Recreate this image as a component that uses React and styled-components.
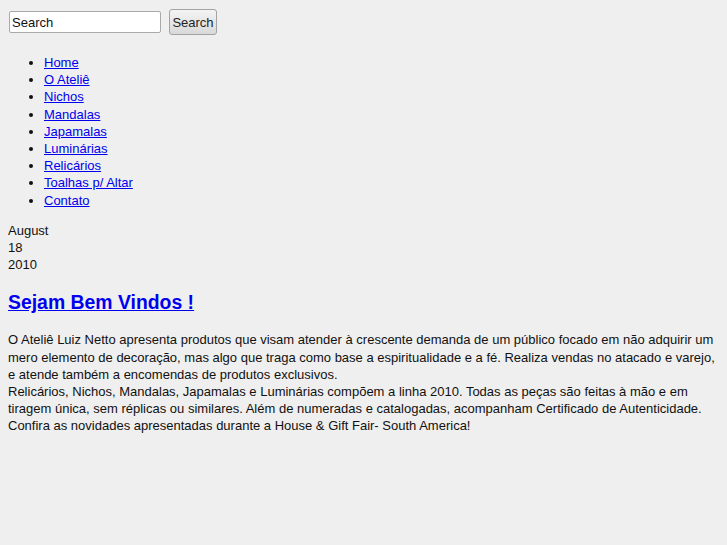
import React from 'react'
import styled, { createGlobalStyle } from 'styled-components'

const GlobalStyle = createGlobalStyle`
  html, body {
    background: #efefef;
  }
  body {
    margin: 8px;
    font-family: "Liberation Sans", Arial, sans-serif;
    font-size: 13px;
    line-height: 17.2px;
    color: #111;
  }
`;

const SearchForm = styled.form`
  display: flex;
  align-items: center;
  gap: 8px;
  padding-left: 1px;
  height: 28px;
`;

const SearchInput = styled.input`
  width: 152px;
  height: 22px;
  box-sizing: border-box;
  border: 1px solid #a9a9a9;
  border-radius: 2px;
  background: #fff;
  padding: 0 2px;
  font-family: inherit;
  font-size: 13px;
  color: #111;
`;

const SearchButton = styled.button`
  width: 48px;
  height: 26px;
  box-sizing: border-box;
  border: 1px solid #a3a3a3;
  border-radius: 3px;
  background: linear-gradient(#f4f4f4, #d9d9d9);
  font-family: inherit;
  font-size: 13px;
  color: #222;
  padding: 0;
`;

const Menu = styled.ul`
  margin: 18px 0 0;
  padding-left: 36px;
  list-style: disc;
`;

const MenuItem = styled.li`
  a {
    color: #0000ee;
  }
`;

const DateBlock = styled.div`
  margin-top: 13px;
  display: flex;
  flex-direction: column;
`;

const Title = styled.h2`
  margin: 17px 0 0;
  font-size: 19.4px;
  line-height: 24px;
  a {
    color: #0000ee;
  }
`;

const Body = styled.p`
  margin: 17px 0 0;
`;

const links = [
  'Home',
  'O Ateliê',
  'Nichos',
  'Mandalas',
  'Japamalas',
  'Luminárias',
  'Relicários',
  'Toalhas p/ Altar',
  'Contato',
];

export default function App() {
  return (
    <>
      <GlobalStyle />
      <SearchForm onSubmit={(e) => e.preventDefault()}>
        <SearchInput defaultValue="Search" />
        <SearchButton type="submit">Search</SearchButton>
      </SearchForm>
      <Menu>
        {links.map((l) => (
          <MenuItem key={l}>
            <a href="#">{l}</a>
          </MenuItem>
        ))}
      </Menu>
      <DateBlock>
        <span>August</span>
        <span>18</span>
        <span>2010</span>
      </DateBlock>
      <Title>
        <a href="#">Sejam Bem Vindos !</a>
      </Title>
      <Body>
        O Ateliê Luiz Netto apresenta produtos que visam atender à crescente demanda de um público focado em não adquirir um mero elemento de decoração, mas algo que traga como base a espiritualidade e a fé. Realiza vendas no atacado e varejo, e atende também a encomendas de produtos exclusivos.
        <br />
        Relicários, Nichos, Mandalas, Japamalas e Luminárias compõem a linha 2010. Todas as peças são feitas à mão e em tiragem única, sem réplicas ou similares. Além de numeradas e catalogadas, acompanham Certificado de Autenticidade.
        <br />
        Confira as novidades apresentadas durante a House &amp; Gift Fair- South America!
      </Body>
    </>
  )
}
